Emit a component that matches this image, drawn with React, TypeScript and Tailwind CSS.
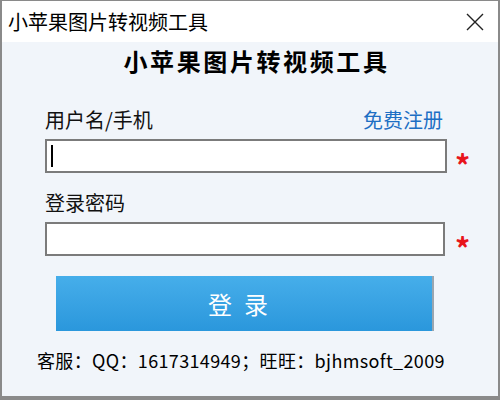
import React from "react";

export default function App() {
  const cjk = { fontFamily: '"Noto Sans CJK SC", "Microsoft YaHei", sans-serif' };
  return (
    <div
      className="w-[500px] h-[400px] flex flex-col bg-[#f1f5fa] border-t border-l-2 border-r-2 border-b-[4px] border-[#8a8a8a] overflow-hidden"
      style={cjk}
    >
      <div className="h-[41px] shrink-0 bg-white flex items-center justify-between pl-[6px] pr-[14px]">
        <span className="text-[20px] leading-[22px] text-black">小苹果图片转视频工具</span>
        <svg width="18" height="18" viewBox="0 0 18 18">
          <path d="M1 1 L17 17 M17 1 L1 17" stroke="#222" strokeWidth="1.4" />
        </svg>
      </div>
      <div className="flex flex-col pl-[43px] pr-[26px]">
        <div className="mt-[6px] h-[26px] text-center text-[24px] leading-[26px] font-bold tracking-[2.6px] text-black pr-[4px]">
          小苹果图片转视频工具
        </div>
        <div className="mt-[36px] flex items-end justify-between w-[402px] h-[20px]">
          <span className="text-[20px] leading-[20px] text-[#111]">用户名/手机</span>
          <span className="text-[20px] leading-[20px] text-[#1d6fc4] mr-[4px]">免费注册</span>
        </div>
        <div className="mt-[9px] flex items-center gap-[8px] h-[34px]">
          <div className="w-[402px] h-[34px] bg-white border-2 border-[#7b7b7b] flex items-center pl-[4px]">
            <div className="w-[2px] h-[22px] bg-black" />
          </div>
          <span className="relative top-[8px] h-[34px] text-[#e8141b] text-[30px] font-bold leading-[34px]">*</span>
        </div>
        <div className="mt-[20px] h-[20px] text-[20px] leading-[20px] text-[#111]">登录密码</div>
        <div className="mt-[9px] flex items-center gap-[10px] h-[34px]">
          <div className="w-[400px] h-[34px] bg-white border-2 border-[#7b7b7b]" />
          <span className="relative top-[8px] h-[34px] text-[#e8141b] text-[30px] font-bold leading-[34px]">*</span>
        </div>
        <div className="mt-[20px] ml-[11px] w-[378px] h-[55px] bg-gradient-to-b from-[#46aeea] to-[#2a97dc] border-r-2 border-[#9aa6b0] flex items-center justify-center">
          <span className="text-white text-[24px] leading-[26px] tracking-[12px]">登录</span>
        </div>
        <div className="mt-[18px] -ml-[8px] h-[22px] text-[18px] leading-[22px] tracking-[0.35px] text-black whitespace-nowrap">
          客服：QQ：1617314949；旺旺：bjhmsoft_2009
        </div>
      </div>
    </div>
  );
}
